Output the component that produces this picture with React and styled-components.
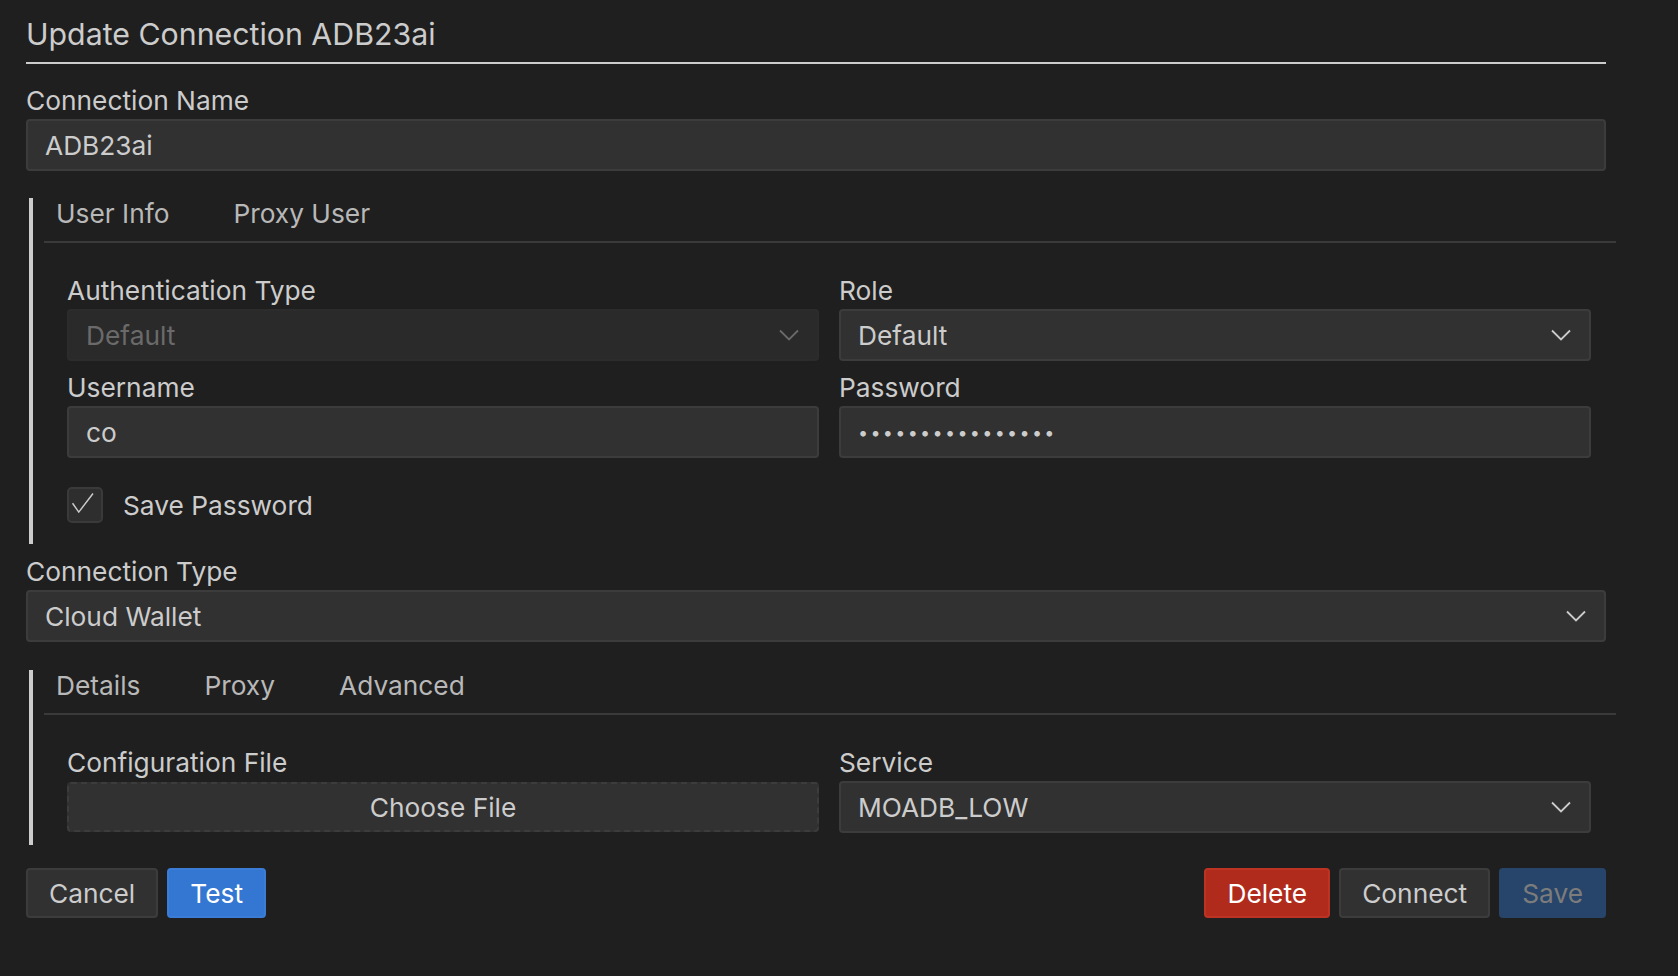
import React from 'react';
import styled, { createGlobalStyle } from 'styled-components';

const GlobalStyle = createGlobalStyle`
  html, body {
    margin: 0;
    padding: 0;
    background: #1f1f1f;
  }
  body {
    font-family: Inter, "Noto Sans", "Liberation Sans", sans-serif;
    color: #cccccc;
  }
`

const Page = styled.div`
  min-height: 976px;
  padding: 16px 0 0 26px;
  box-sizing: border-box;
`

const Form = styled.div`
  width: 1580px;
  display: flex;
  flex-direction: column;
`

const Title = styled.h1`
  margin: 0;
  font-size: 30.3px;
  font-weight: 400;
  line-height: 36px;
  color: #cccccc;
  padding-bottom: 10px;
  border-bottom: 2px solid #cccccc;
`

const Field = styled.div`
  display: flex;
  flex-direction: column;
  margin-top: ${props => props.top || 0}px;
`

const Label = styled.label`
  font-size: 26.3px;
  line-height: 32px;
  color: #cccccc;
  margin-bottom: 2px;
`

const Box = styled.div`
  height: 52px;
  box-sizing: border-box;
  display: flex;
  align-items: center;
  justify-content: space-between;
  padding: 0 18px 0 17px;
  border: 2px solid ${props => props.disabled ? '#2c2c2c' : '#3c3c3c'};
  border-radius: 4px;
  background: ${props => props.disabled ? '#2a2a2a' : '#313131'};
  color: ${props => props.disabled ? '#6a6a6a' : '#cccccc'};
  font-size: 26.3px;
`

const Dots = styled.span`
  font-size: 18px;
  letter-spacing: 2.3px;
  color: #cccccc;
`

const Group = styled.div`
  margin: ${props => props.top}px -10px 0 3px;
  border-left: 4px solid #cccccc;
  padding-bottom: ${props => props.bottom}px;
`

const TabRow = styled.div`
  display: flex;
  gap: 40px;
  margin-left: 11px;
  padding-bottom: 11px;
  border-bottom: 2px solid #3a3a3a;
`

const Tab = styled.div`
  padding: 0 12px;
  font-size: 26.3px;
  line-height: 32px;
  color: #b8b8b8;
`

const Body = styled.div`
  display: grid;
  grid-template-columns: 1fr 1fr;
  column-gap: 20px;
  row-gap: 11px;
  padding: 32px 25px 0 34px;
`

const CheckRow = styled.div`
  grid-column: 1 / 3;
  display: flex;
  align-items: center;
  gap: 20px;
  margin-top: 18px;
  font-size: 26.3px;
  color: #cccccc;
`

const CheckBox = styled.div`
  width: 36px;
  height: 36px;
  box-sizing: border-box;
  border: 2px solid #3a3a3a;
  border-radius: 5px;
  background: #2e2e2e;
  display: flex;
  align-items: center;
  justify-content: center;
`

const FileButton = styled.div`
  height: 50px;
  box-sizing: border-box;
  margin-top: 1px;
  display: flex;
  align-items: center;
  justify-content: center;
  border: 2px dashed #3c3c3c;
  border-radius: 4px;
  background: #313131;
  font-size: 26.3px;
  color: #cccccc;
`

const Actions = styled.div`
  display: flex;
  align-items: center;
  gap: 9px;
  margin-top: 23px;
`

const Spacer = styled.div`
  flex: 1;
`

const variants = {
  secondary: { bg: '#313131', border: '#3c3c3c', color: '#cccccc' },
  primary: { bg: '#3477d2', border: '#3a7cd6', color: '#ffffff' },
  danger: { bg: '#b12b1c', border: '#bd3323', color: '#ffffff' },
  disabled: { bg: '#27456a', border: '#27456a', color: '#7c7c7c' },
}

const Button = styled.button`
  height: 50px;
  box-sizing: border-box;
  padding: 0 21px;
  font-family: inherit;
  font-size: 26.3px;
  border-radius: 4px;
  border: 2px solid ${props => variants[props.variant].border};
  background: ${props => variants[props.variant].bg};
  color: ${props => variants[props.variant].color};
`

const Chevron = ({ color = '#cccccc' }) => (
  <svg width="20" height="12" viewBox="0 0 20 12" fill="none">
    <path d="M1 1.5 L10 10.5 L19 1.5" stroke={color} strokeWidth="1.8" />
  </svg>
)

const Check = () => (
  <svg width="36" height="36" viewBox="0 0 36 36" fill="none">
    <path d="M4 16 L11 26 L27 5" stroke="#cccccc" strokeWidth="1.6" />
  </svg>
)

export default function App() {
  return (
    <Page>
      <GlobalStyle />
      <Form>
        <Title>Update Connection ADB23ai</Title>

        <Field top={21}>
          <Label>Connection Name</Label>
          <Box>ADB23ai</Box>
        </Field>

        <Group top={27} bottom={21}>
          <TabRow>
            <Tab>User Info</Tab>
            <Tab>Proxy User</Tab>
          </TabRow>
          <Body>
            <Field>
              <Label>Authentication Type</Label>
              <Box disabled>Default<Chevron color="#6a6a6a" /></Box>
            </Field>
            <Field>
              <Label>Role</Label>
              <Box>Default<Chevron /></Box>
            </Field>
            <Field>
              <Label>Username</Label>
              <Box>co</Box>
            </Field>
            <Field>
              <Label>Password</Label>
              <Box><Dots>{'\u2022'.repeat(16)}</Dots></Box>
            </Field>
            <CheckRow>
              <CheckBox><Check /></CheckBox>
              Save Password
            </CheckRow>
          </Body>
        </Group>

        <Field top={12}>
          <Label>Connection Type</Label>
          <Box>Cloud Wallet<Chevron /></Box>
        </Field>

        <Group top={28} bottom={12}>
          <TabRow>
            <Tab>Details</Tab>
            <Tab>Proxy</Tab>
            <Tab>Advanced</Tab>
          </TabRow>
          <Body>
            <Field>
              <Label>Configuration File</Label>
              <FileButton>Choose File</FileButton>
            </Field>
            <Field>
              <Label>Service</Label>
              <Box>MOADB_LOW<Chevron /></Box>
            </Field>
          </Body>
        </Group>

        <Actions>
          <Button variant="secondary">Cancel</Button>
          <Button variant="primary">Test</Button>
          <Spacer />
          <Button variant="danger">Delete</Button>
          <Button variant="secondary">Connect</Button>
          <Button variant="disabled">Save</Button>
        </Actions>
      </Form>
    </Page>
  );
}
